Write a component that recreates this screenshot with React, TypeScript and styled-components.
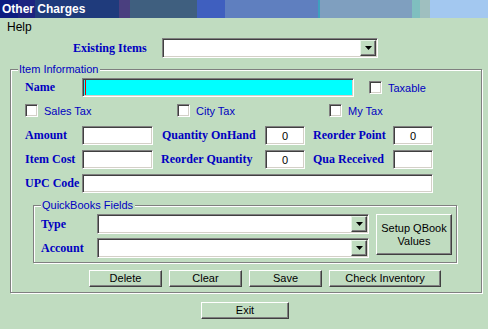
import styled, { createGlobalStyle } from "styled-components";

const GlobalStyle = createGlobalStyle`
  body {
    margin: 0;
    background: #c0dcc0;
  }
`;

const Window = styled.div`
  width: 488px;
  height: 329px;
  background: #c0dcc0;
  display: flex;
  flex-direction: column;
  font-family: "Liberation Sans", Arial, sans-serif;
  font-size: 11px;
  overflow: hidden;
`;

const TitleBar = styled.div`
  height: 18px;
  padding-left: 2px;
  display: flex;
  align-items: center;
  color: #fff;
  font-weight: bold;
  font-size: 12px;
  background: linear-gradient(
    to right,
    #0c1c80 0 18px,
    #1c2380 18px 35px,
    #1f3b7c 35px 119px,
    #4a3f7f 119px 130px,
    #3f5f7f 130px 197px,
    #3f5fbf 197px 225px,
    #5f7fbf 225px 318px,
    #3f9fbf 318px 320px,
    #7f9fbf 320px 412px,
    #7fbfbf 412px 420px,
    #9fbfbf 420px 430px,
    #a3c8f0 430px
  );
`;

const MenuBar = styled.div`
  height: 18px;
  padding-left: 7px;
  display: flex;
  align-items: center;
  color: #000;
  font-size: 12px;
`;

const ExistingRow = styled.div`
  margin-top: 2px;
  padding-left: 73px;
  display: flex;
  align-items: center;
  height: 20px;
`;

const Label = styled.span<{ $w?: number }>`
  font-family: "Liberation Serif", "Times New Roman", serif;
  font-weight: bold;
  font-size: 12px;
  color: #0000c0;
  white-space: nowrap;
  ${(p) => (p.$w ? `width: ${p.$w}px; flex: none;` : "")}
`;

const Sunken = styled.div<{ $w: number; $h?: number; $bg?: string }>`
  position: relative;
  box-sizing: border-box;
  flex: none;
  width: ${(p) => p.$w}px;
  height: ${(p) => p.$h ?? 19}px;
  background: ${(p) => p.$bg ?? "#fff"};
  border-top: 1px solid #808080;
  border-left: 1px solid #808080;
  border-right: 1px solid #fff;
  border-bottom: 1px solid #fff;
  box-shadow: inset 1px 1px 0 #404040, inset -1px -1px 0 #d4d0c8;
  display: flex;
  align-items: center;
  justify-content: center;
  font-size: 11px;
  color: #000;
`;

const Caret = styled.span`
  position: absolute;
  left: 2px;
  top: 1px;
  bottom: 1px;
  width: 1px;
  background: #e00000;
`;

const DropButton = styled.div`
  position: absolute;
  right: 1px;
  top: 1px;
  bottom: 1px;
  width: 16px;
  box-sizing: border-box;
  background: #c0dcc0;
  border-top: 1px solid #e8f4e8;
  border-left: 1px solid #e8f4e8;
  border-right: 1px solid #404040;
  border-bottom: 1px solid #404040;
  box-shadow: inset -1px -1px 0 #808080;
  display: flex;
  align-items: center;
  justify-content: center;
`;

const Combo = ({ w, h = 20 }: { w: number; h?: number }) => (
  <Sunken $w={w} $h={h}>
    <DropButton>
      <svg width="7" height="4" viewBox="0 0 7 4">
        <path d="M0 0h7L3.5 4z" fill="#000" />
      </svg>
    </DropButton>
  </Sunken>
);

const Group = styled.div<{ $w: number; $h: number }>`
  position: relative;
  box-sizing: border-box;
  flex: none;
  width: ${(p) => p.$w}px;
  height: ${(p) => p.$h}px;
  border: 1px solid #808080;
  box-shadow: inset 1px 1px 0 #fff, 1px 1px 0 #fff;
`;

const Legend = styled.span`
  position: absolute;
  top: -8px;
  left: 7px;
  padding: 0 2px 0 1px;
  background: #c0dcc0;
  color: #0000c0;
  font-size: 11px;
  line-height: 14px;
`;

const ItemGroup = styled(Group)`
  margin: 11px 0 0 10px;
  padding: 8px 0 0 14px;
  display: flex;
  flex-direction: column;
`;

const Row = styled.div<{ $top?: number }>`
  display: flex;
  align-items: center;
  margin-top: ${(p) => p.$top ?? 0}px;
`;

const CheckCell = styled.label<{ $w?: number }>`
  display: flex;
  align-items: center;
  gap: 6px;
  color: #0000c0;
  font-size: 11px;
  ${(p) => (p.$w ? `width: ${p.$w}px;` : "")}
`;

const CheckBox = styled.span`
  box-sizing: border-box;
  width: 13px;
  height: 13px;
  background: #fff;
  border-top: 1px solid #808080;
  border-left: 1px solid #808080;
  border-right: 1px solid #fff;
  border-bottom: 1px solid #fff;
  box-shadow: inset 1px 1px 0 #404040, inset -1px -1px 0 #d4d0c8;
`;

const QBGroup = styled(Group)`
  margin: 12px 0 0 8px;
  padding: 8px 0 0 7px;
  display: flex;
  gap: 7px;
`;

const QBFields = styled.div`
  display: flex;
  flex-direction: column;
  gap: 4px;
`;

const Button = styled.button<{ $w: number; $h?: number }>`
  box-sizing: border-box;
  width: ${(p) => p.$w}px;
  height: ${(p) => p.$h ?? 17}px;
  padding: 0;
  background: #c0dcc0;
  border-top: 1px solid #fff;
  border-left: 1px solid #fff;
  border-right: 1px solid #404040;
  border-bottom: 1px solid #404040;
  box-shadow: inset -1px -1px 0 #808080;
  font-family: "Liberation Sans", Arial, sans-serif;
  font-size: 11px;
  line-height: 13px;
  color: #000;
`;

const ButtonRow = styled.div`
  display: flex;
  gap: 7px;
  margin-top: 7px;
  padding-left: 64px;
`;

const ExitRow = styled.div`
  margin: 9px 0 0 201px;
`;

export default function App() {
  return (
    <Window>
      <GlobalStyle />
      <TitleBar>Other Charges</TitleBar>
      <MenuBar>Help</MenuBar>
      <ExistingRow>
        <Label $w={89}>Existing Items</Label>
        <Combo w={216} />
      </ExistingRow>
      <ItemGroup $w={472} $h={224}>
        <Legend>Item Information</Legend>
        <Row>
          <Label $w={57}>Name</Label>
          <Sunken $w={272} $bg="#00ffff">
            <Caret />
          </Sunken>
          <CheckCell style={{ marginLeft: 15 }}>
            <CheckBox />
            Taxable
          </CheckCell>
        </Row>
        <Row $top={7}>
          <CheckCell $w={152}>
            <CheckBox />
            Sales Tax
          </CheckCell>
          <CheckCell $w={152}>
            <CheckBox />
            City Tax
          </CheckCell>
          <CheckCell>
            <CheckBox />
            My Tax
          </CheckCell>
        </Row>
        <Row $top={9}>
          <Label $w={57}>Amount</Label>
          <Sunken $w={71} />
          <Label $w={103} style={{ marginLeft: 9 }}>
            Quantity OnHand
          </Label>
          <Sunken $w={40}>0</Sunken>
          <Label $w={80} style={{ marginLeft: 8 }}>
            Reorder Point
          </Label>
          <Sunken $w={40}>0</Sunken>
        </Row>
        <Row $top={5}>
          <Label $w={57}>Item Cost</Label>
          <Sunken $w={71} />
          <Label $w={104} style={{ marginLeft: 8 }}>
            Reorder Quantity
          </Label>
          <Sunken $w={40}>0</Sunken>
          <Label $w={80} style={{ marginLeft: 8 }}>
            Qua Received
          </Label>
          <Sunken $w={40} />
        </Row>
        <Row $top={5}>
          <Label $w={57}>UPC Code</Label>
          <Sunken $w={351} />
        </Row>
        <QBGroup $w={424} $h={58}>
          <Legend>QuickBooks Fields</Legend>
          <QBFields>
            <Row>
              <Label $w={56}>Type</Label>
              <Combo w={272} />
            </Row>
            <Row>
              <Label $w={56}>Account</Label>
              <Combo w={272} />
            </Row>
          </QBFields>
          <Button $w={76} $h={41}>
            Setup QBook
            <br />
            Values
          </Button>
        </QBGroup>
        <ButtonRow>
          <Button $w={73}>Delete</Button>
          <Button $w={73}>Clear</Button>
          <Button $w={73}>Save</Button>
          <Button $w={112}>Check Inventory</Button>
        </ButtonRow>
      </ItemGroup>
      <ExitRow>
        <Button $w={88}>Exit</Button>
      </ExitRow>
    </Window>
  );
}
